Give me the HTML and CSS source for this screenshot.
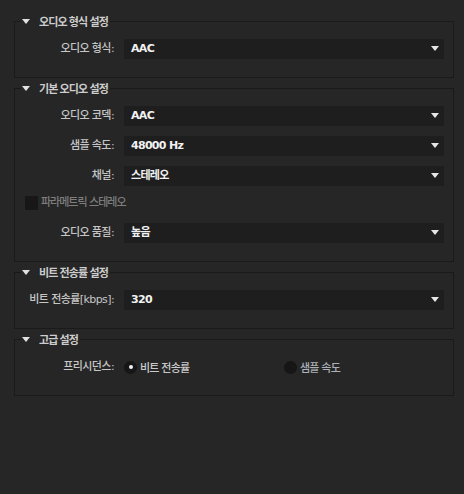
FILE: index.html
```html
<!DOCTYPE html>
<html lang="ko">
<head>
<meta charset="utf-8">
<title>오디오 설정</title>
<link rel="stylesheet" href="styles.css">
</head>
<body>
<div class="page">
  <fieldset class="group">
    <legend class="group-title"><span class="twisty"></span>오디오 형식 설정</legend>
    <div class="rows">
      <div class="label">오디오 형식:</div>
      <div class="select"><span class="value">AAC</span><span class="arrow"></span></div>
    </div>
  </fieldset>

  <fieldset class="group">
    <legend class="group-title"><span class="twisty"></span>기본 오디오 설정</legend>
    <div class="rows">
      <div class="label">오디오 코덱:</div>
      <div class="select"><span class="value">AAC</span><span class="arrow"></span></div>
      <div class="label">샘플 속도:</div>
      <div class="select"><span class="value">48000 Hz</span><span class="arrow"></span></div>
      <div class="label">채널:</div>
      <div class="select"><span class="value">스테레오</span><span class="arrow"></span></div>
      <div class="check-row"><span class="checkbox"></span><span class="check-text">파라메트릭 스테레오</span></div>
      <div class="label">오디오 품질:</div>
      <div class="select"><span class="value">높음</span><span class="arrow"></span></div>
    </div>
  </fieldset>

  <fieldset class="group">
    <legend class="group-title"><span class="twisty"></span>비트 전송률 설정</legend>
    <div class="rows">
      <div class="label">비트 전송률[kbps]:</div>
      <div class="select"><span class="value">320</span><span class="arrow"></span></div>
    </div>
  </fieldset>

  <fieldset class="group">
    <legend class="group-title"><span class="twisty"></span>고급 설정</legend>
    <div class="rows">
      <div class="label">프리시던스:</div>
      <div class="radios">
        <div class="radio-item"><span class="radio checked"></span><span class="radio-text">비트 전송률</span></div>
        <div class="radio-item"><span class="radio"></span><span class="radio-text dim">샘플 속도</span></div>
      </div>
    </div>
  </fieldset>
</div>
</body>
</html>
```

FILE: styles.css
```css
html, body {
  margin: 0;
  padding: 0;
  background: #262626;
}

body {
  width: 464px;
  height: 494px;
  overflow: hidden;
  font-family: "DejaVu Sans", "Noto Sans CJK KR", sans-serif;
  font-size: 11px;
  color: #c4c4c4;
}

.page {
  display: flex;
  flex-direction: column;
  gap: 3px;
  padding-top: 14px;
}

.group {
  margin: 0 10px 0 14px;
  min-width: 0;
  border: 1px solid #1a1a1a;
  padding: 11px 9px 18px 0;
  background: #262626;
}

.group-title {
  display: flex;
  align-items: center;
  margin-left: 6px;
  padding: 0 2px 0 1px;
  height: 14px;
  line-height: 14px;
  font-weight: bold;
  color: #cdcdcd;
  letter-spacing: -0.9px;
  font-family: "Noto Sans CJK KR", sans-serif;
}

.twisty {
  width: 0;
  height: 0;
  border-left: 4px solid transparent;
  border-right: 4px solid transparent;
  border-top: 5px solid #e2e2e2;
  margin-right: 9px;
}

.rows {
  display: grid;
  grid-template-columns: 98px 1fr;
  column-gap: 10px;
  row-gap: 10px;
  margin-left: 1px;
}

.label {
  text-align: right;
  line-height: 20px;
  height: 20px;
  white-space: nowrap;
  letter-spacing: -0.6px;
  color: #c6c6c6;
  font-weight: 500;
}

.select {
  height: 20px;
  background: #1e1e1e;
  display: flex;
  align-items: center;
  justify-content: space-between;
  padding: 0 5px 0 7px;
}

.value {
  color: #f2f2f2;
  font-weight: bold;
  letter-spacing: -0.7px;
  line-height: 20px;
}

.arrow {
  width: 0;
  height: 0;
  border-left: 4.5px solid transparent;
  border-right: 4.5px solid transparent;
  border-top: 5px solid #e6e6e6;
  margin-top: -1px;
}

.check-row {
  grid-column: 1 / -1;
  display: flex;
  align-items: center;
  height: 14px;
  padding-left: 9px;
  margin-bottom: 3px;
}

.checkbox {
  width: 13px;
  height: 14px;
  background: #171717;
  margin-right: 3px;
}

.check-text {
  color: #7e7e7e;
  font-weight: 500;
  letter-spacing: -1px;
  line-height: 14px;
}

.radios {
  display: grid;
  grid-template-columns: 1fr 1fr;
  height: 20px;
}

.radio-item {
  display: flex;
  align-items: center;
  gap: 3px;
}

.radio {
  width: 13px;
  height: 13px;
  border-radius: 50%;
  background: #161616;
  display: flex;
  align-items: center;
  justify-content: center;
}

.radio.checked::after {
  content: "";
  width: 4px;
  height: 4px;
  border-radius: 50%;
  background: #f2f2f2;
}

.radio-text {
  color: #cacaca;
  font-weight: 500;
  letter-spacing: -0.8px;
}

.radio-text.dim {
  color: #aab0b6;
}
```
